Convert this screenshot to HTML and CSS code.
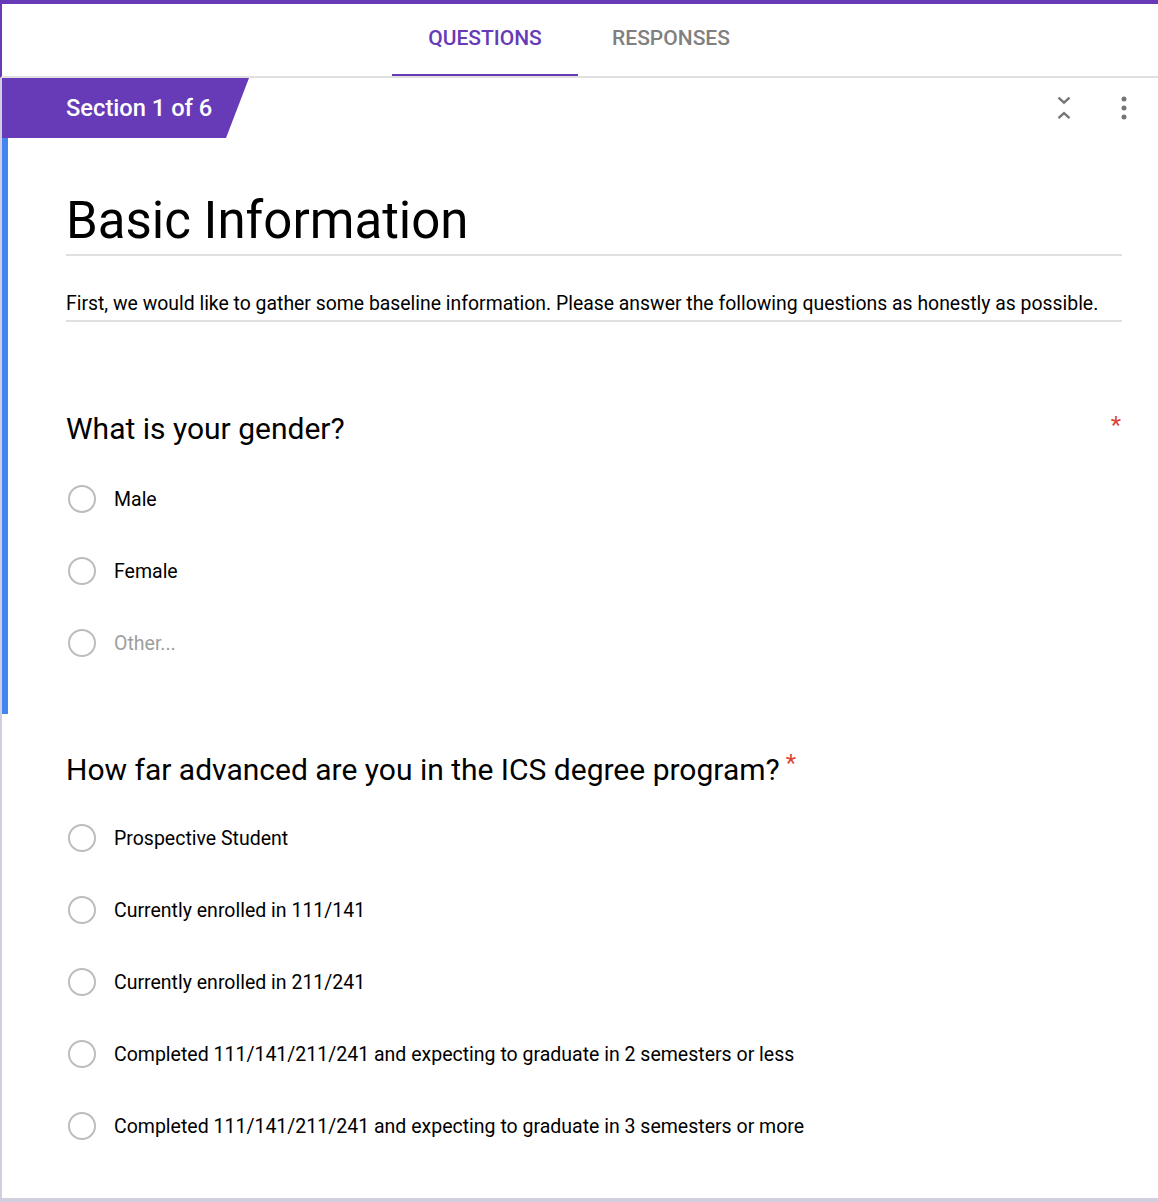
FILE: index.html
```html
<!DOCTYPE html>
<html>
<head>
<meta charset="utf-8">
<link rel="stylesheet" href="styles.css">
</head>
<body>
<div class="topbar"></div>
<div class="tabs">
  <div class="tab active">Questions</div>
  <div class="tab">Responses</div>
</div>
<main class="main">
  <div class="section-row">
    <div class="section-tab">Section 1 of 6</div>
    <div class="section-actions">
      <svg class="icon" width="24" height="24" viewBox="0 0 24 24"><path d="M6.5 1.6 12 6.6 17.5 1.6 M6.5 22.2 12 17.2 17.5 22.2" fill="none" stroke="#757575" stroke-width="2.4"/></svg>
      <svg class="icon" width="24" height="24" viewBox="0 0 24 24"><circle cx="12" cy="3" r="2.5" fill="#757575"/><circle cx="12" cy="12" r="2.5" fill="#757575"/><circle cx="12" cy="21" r="2.5" fill="#757575"/></svg>
    </div>
  </div>
  <div class="card active-card">
    <h1 class="form-title">Basic Information</h1>
    <p class="form-desc">First, we would like to gather some baseline information. Please answer the following questions as honestly as possible.</p>
    <div class="question q1">
      <div class="q-title full"><span>What is your gender?</span><span class="req">*</span></div>
      <div class="option"><span class="radio"></span><span class="label">Male</span></div>
      <div class="option"><span class="radio"></span><span class="label">Female</span></div>
      <div class="option"><span class="radio"></span><span class="label other">Other...</span></div>
    </div>
  </div>
  <div class="card">
    <div class="question q2">
      <div class="q-title"><span>How far advanced are you in the ICS degree program?</span><span class="req inline">*</span></div>
      <div class="option"><span class="radio"></span><span class="label">Prospective Student</span></div>
      <div class="option"><span class="radio"></span><span class="label">Currently enrolled in 111/141</span></div>
      <div class="option"><span class="radio"></span><span class="label">Currently enrolled in 211/241</span></div>
      <div class="option"><span class="radio"></span><span class="label">Completed 111/141/211/241 and expecting to graduate in 2 semesters or less</span></div>
      <div class="option"><span class="radio"></span><span class="label">Completed 111/141/211/241 and expecting to graduate in 3 semesters or more</span></div>
    </div>
  </div>
</main>
</body>
</html>
```
FILE: styles.css
```css
* { box-sizing: border-box; }
html, body { margin: 0; padding: 0; }
body {
  background: #d3cde0;
  font-family: Roboto, "Noto Sans", Arial, sans-serif;
  color: #000;
  height: 1202px;
  overflow: hidden;
}
.topbar { height: 4px; background: #673ab7; }
.tabs {
  display: flex;
  justify-content: center;
  height: 74px;
  padding-right: 4px;
  background: #fff;
  border-left: 2px solid #673ab7;
  border-bottom: 2px solid #e0e0e0;
}
.tab {
  width: 186px;
  height: 72px;
  display: flex;
  align-items: center;
  justify-content: center;
  padding-bottom: 3px;
  text-transform: uppercase;
  font-weight: 500;
  font-size: 21px;
  color: #808080;
  border-bottom: 2px solid transparent;
}
.tab.active { color: #673ab7; border-bottom-color: #673ab7; }
.main {
  margin-left: 2px;
  background: #fff;
  height: 1120px;
}
.section-row {
  display: flex;
  justify-content: space-between;
  align-items: center;
  height: 60px;
}
.section-tab {
  width: 247px;
  height: 60px;
  background: #673ab7;
  color: #fff;
  font-size: 23.7px;
  font-weight: 500;
  display: flex;
  align-items: center;
  padding-left: 64px;
  clip-path: polygon(0 0, 100% 0, 224px 100%, 0 100%);
}
.section-actions {
  display: flex;
  gap: 36px;
  padding-right: 22px;
}
.icon { display: block; }
.card {
  padding-left: 58px;
  padding-right: 36px;
  border-left: 6px solid transparent;
}
.active-card {
  border-left-color: #4285f4;
  padding-top: 55px;
  height: 576px;
}
.form-title {
  margin: 0;
  font-size: 51px;
  font-weight: 400;
  line-height: 56px;
  padding-bottom: 5px;
  border-bottom: 2px solid #e0e0e0;
}
.form-desc {
  margin: 36px 0 0;
  font-size: 19.4px;
  line-height: 24px;
  padding-bottom: 4px;
  border-bottom: 2px solid #e0e0e0;
}
.q1 { margin-top: 87px; }
.q2 { padding-top: 36px; }
.q-title {
  font-size: 30px;
  line-height: 40px;
  display: flex;
}
.q-title.full { justify-content: space-between; }
.q1 .q-title { margin-bottom: 14px; }
.q2 .q-title { margin-bottom: 12px; }
.req {
  color: #db4437;
  font-size: 24px;
  line-height: 24px;
  margin-top: 4px;
  margin-right: 1px;
}
.req.inline { margin-left: 6px; margin-top: 1px; }
.option {
  display: flex;
  align-items: center;
  height: 72px;
}
.radio {
  width: 28px;
  height: 28px;
  border: 2px solid #bdbdbd;
  border-radius: 50%;
  margin-left: 2px;
  flex: none;
}
.label {
  margin-left: 18px;
  font-size: 19.5px;
  color: #000;
}
.label.other { color: #9e9e9e; }
```
